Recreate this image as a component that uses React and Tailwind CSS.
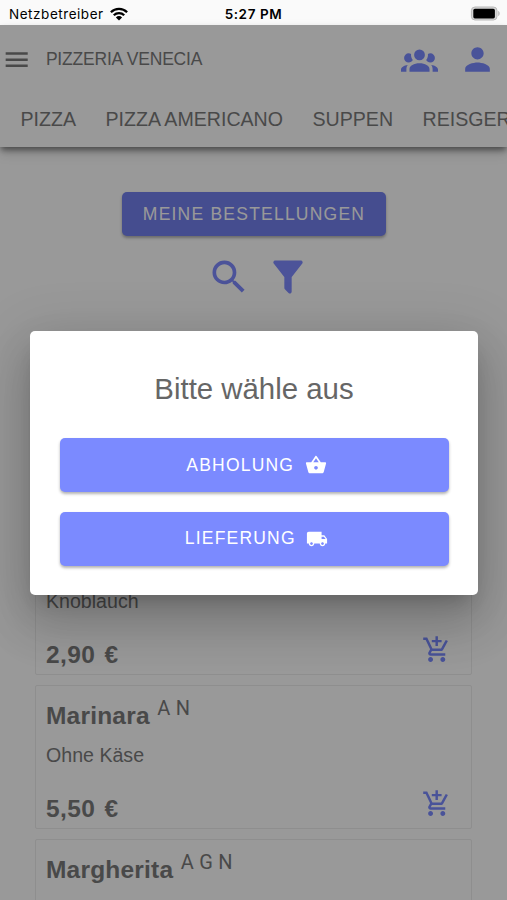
import React, { useState } from 'react';
import { MdShoppingBasket, MdLocalShipping, MdPerson, MdMenu, MdAddShoppingCart } from 'react-icons/md';

const categories = ['PIZZA', 'PIZZA AMERICANO', 'SUPPEN', 'REISGERICHTE'];

const products = [
    { name: 'Pizzabrot', additives: 'A', description: 'Knoblauch', price: '2,90 €' },
    { name: 'Marinara', additives: 'A N', description: 'Ohne Käse', price: '5,50 €' },
    { name: 'Margherita', additives: 'A G N' },
];

const GroupIcon = ({ className }) => (
    <svg viewBox="0 0 24 24" fill="currentColor" className={className}>
        <path d="M12,5.5A3.5,3.5 0 0,1 15.5,9A3.5,3.5 0 0,1 12,12.5A3.5,3.5 0 0,1 8.5,9A3.5,3.5 0 0,1 12,5.5M5,8C5.56,8 6.08,8.15 6.53,8.42C6.38,9.85 6.8,11.27 7.66,12.38C7.16,13.34 6.16,14 5,14A3,3 0 0,1 2,11A3,3 0 0,1 5,8M19,8A3,3 0 0,1 22,11A3,3 0 0,1 19,14C17.84,14 16.84,13.34 16.34,12.38C17.2,11.27 17.62,9.85 17.47,8.42C17.92,8.15 18.44,8 19,8M5.5,18.25C5.5,16.18 8.41,14.5 12,14.5C15.59,14.5 18.5,16.18 18.5,18.25V20H5.5V18.25M0,20V18.5C0,17.11 1.89,15.94 4.45,15.6C3.86,16.28 3.5,17.22 3.5,18.25V20H0M24,20H20.5V18.25C20.5,17.22 20.14,16.28 19.55,15.6C22.11,15.94 24,17.11 24,18.5V20Z" />
    </svg>
);

const SearchIcon = ({ className }) => (
    <svg viewBox="0 0 24 24" fill="currentColor" className={className}>
        <path d="M9.5,3A6.5,6.5 0 0,1 16,9.5C16,11.11 15.41,12.59 14.44,13.73L14.71,14H15.5L20.5,19L19,20.5L14,15.5V14.71L13.73,14.44C12.59,15.41 11.11,16 9.5,16A6.5,6.5 0 0,1 3,9.5A6.5,6.5 0 0,1 9.5,3M9.5,5C7,5 5,7 5,9.5C5,12 7,14 9.5,14C12,14 14,12 14,9.5C14,7 12,5 9.5,5Z" />
    </svg>
);

const FilterIcon = ({ className }) => (
    <svg viewBox="0 0 24 24" fill="currentColor" className={className}>
        <path d="M14,12V19.88C14.04,20.18 13.94,20.5 13.71,20.71C13.32,21.1 12.69,21.1 12.3,20.71L10.29,18.7C10.06,18.47 9.96,18.16 10,17.87V12H9.97L4.21,4.62C3.87,4.19 3.95,3.56 4.38,3.22C4.57,3.08 4.78,3 5,3V3H19V3C19.22,3 19.43,3.08 19.62,3.22C20.05,3.56 20.13,4.19 19.79,4.62L14.03,12H14Z" />
    </svg>
);

const WifiIcon = () => (
    <svg viewBox="0 0 18 14" className="ml-[6px] h-[14px] w-[18px]">
        <g fill="none" stroke="black" strokeWidth="2.3">
            <path d="M0.9 5.2a11.6 11.6 0 0 1 16.2 0" />
            <path d="M3.8 8.2a7.4 7.4 0 0 1 10.4 0" />
        </g>
        <path d="M9 13.6l-3.1-3.2a4.4 4.4 0 0 1 6.2 0z" />
    </svg>
);

const BatteryIcon = () => (
    <svg viewBox="0 0 31 15" className="h-[15px] w-[31px]">
        <rect x="1.4" y="1" width="25.6" height="13" rx="3.6" fill="#d6d6d6" stroke="#b9b9b9" strokeWidth="1" />
        <rect x="3.3" y="2.8" width="21.6" height="9.6" rx="1.6" />
        <path d="M28.2 5c2 .6 2 4.4 0 5z" fill="#b9b9b9" />
    </svg>
);

const StatusBar = () => (
    <div className="grid h-[25px] grid-cols-3 items-center bg-[#fafafa] pt-[2px] font-['Inter',sans-serif] text-[13.5px] leading-[20px] text-black">
        <div className="flex items-center pl-[9px]">
            <span className="tracking-[0.54px]">Netzbetreiber</span>
            <WifiIcon />
        </div>
        <div className="text-center font-semibold tracking-[0.6px]">5:27 PM</div>
        <div className="flex justify-end pr-[6px]">
            <BatteryIcon />
        </div>
    </div>
);

const Header = () => (
    <header className="h-[122px] bg-white shadow-[0_4px_6px_-1px_rgba(0,0,0,0.45),0_6px_12px_rgba(0,0,0,0.14)]">
        <div className="flex h-[69px] items-center pr-[11px] pl-[2px]">
            <MdMenu className="size-[29.4px]" />
            <h1 className="ml-[14.5px] grow text-[17.5px] tracking-[-0.2px]">PIZZERIA VENECIA</h1>
            <GroupIcon className="size-[37px] text-[#7b8aff]" />
            <MdPerson className="ml-[21px] size-[37px] text-[#7b8aff]" />
        </div>
        <nav className="flex gap-[29.5px] overflow-hidden pt-[10px] pl-[20.5px] text-[19.6px] leading-[30px] whitespace-nowrap">
            {categories.map(category => (
                <a key={category}>{category}</a>
            ))}
        </nav>
    </header>
);

const ProductCard = ({ name, additives, description, price }) => (
    <div className="h-[144px] shrink-0 rounded-[2px] border border-[#ededed] px-[10px]">
        <div className="flex pt-[7px]">
            <h2 className="pt-[8px] text-[24.5px] leading-[30px] font-bold tracking-[0.2px]">{name}</h2>
            <span className="ml-[7.5px] font-['Roboto',sans-serif] text-[20px] leading-[30px] tracking-[0.2px]">{additives}</span>
        </div>
        {description && <p className="mt-[9px] text-[19.6px] leading-[30px]">{description}</p>}
        {price && (
            <div className="mt-[12px] flex items-center justify-between pr-[10px]">
                <span className="pt-[12px] text-[24.5px] leading-[30px] font-bold tracking-[0.4px] [word-spacing:2px]">{price}</span>
                <MdAddShoppingCart className="mt-px size-[29.4px] text-[#7b8aff]" />
            </div>
        )}
    </div>
);

const ChoiceDialog = ({ onSelect }) => (
    <div className="absolute inset-x-0 top-[25px] bottom-0 bg-black/40">
        <div className="mx-[30px] mt-[306px] h-[264px] w-[448px] rounded-[5px] bg-white px-[29.5px] text-[#666] shadow-[0_13px_18px_-9px_rgba(0,0,0,0.2),0_29px_47px_4px_rgba(0,0,0,0.14),0_11px_56px_10px_rgba(0,0,0,0.12)]">
            <h2 className="pt-[38px] text-center text-[29.4px] leading-[40px]">Bitte wähle aus</h2>
            <div className="mt-[29px] flex flex-col gap-[19.5px] text-[17.5px] tracking-[1.2px] text-white">
                <button
                    onClick={() => onSelect('pickup')}
                    className="flex h-[54px] items-center justify-center rounded-[5px] bg-[#7b8aff] pl-[5px] shadow-[0_2px_3px_rgba(0,0,0,0.3)]"
                >
                    ABHOLUNG
                    <MdShoppingBasket className="ml-[10.5px] size-[22px]" />
                </button>
                <button
                    onClick={() => onSelect('delivery')}
                    className="flex h-[54px] items-center justify-center rounded-[5px] bg-[#7b8aff] pl-[5px] shadow-[0_2px_3px_rgba(0,0,0,0.3)]"
                >
                    LIEFERUNG
                    <MdLocalShipping className="ml-[10.5px] size-[22px]" />
                </button>
            </div>
        </div>
    </div>
);

const App = () => {
    const [orderType, setOrderType] = useState(null);

    return (
        <div className="relative h-[900px] w-[507px] overflow-hidden bg-white font-['Liberation_Sans',Arial,sans-serif] text-[#7b7b7b]">
            <StatusBar />
            <Header />

            <main className="flex flex-col">
                <div className="flex flex-col items-center pt-[45px]">
                    <button className="h-[44px] w-[264px] rounded-[5px] bg-[#7380ee] pl-[1px] text-[17.5px] tracking-[1.22px] text-white shadow-[0_2px_3px_rgba(0,0,0,0.3)]">
                        MEINE BESTELLUNGEN
                    </button>
                    <div className="mt-[18.5px] flex gap-[15px] pl-[10px] text-[#7f8bff]">
                        <SearchIcon className="size-[44px]" />
                        <FilterIcon className="size-[44px]" />
                    </div>
                </div>

                <div className="mt-[232.5px] flex flex-col gap-[10px] px-[35px]">
                    {products.map(product => (
                        <ProductCard key={product.name} {...product} />
                    ))}
                </div>
            </main>

            {!orderType && <ChoiceDialog onSelect={setOrderType} />}
        </div>
    );
};

export default App;
